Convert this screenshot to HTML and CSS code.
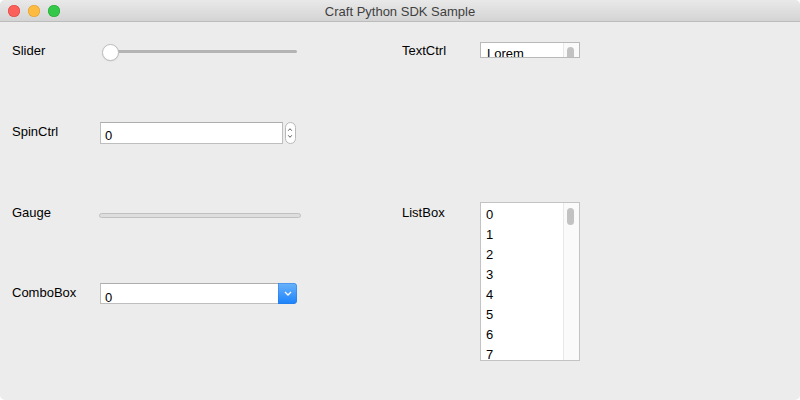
FILE: index.html
```html
<!DOCTYPE html>
<html>
<head>
<meta charset="utf-8">
<title>Craft Python SDK Sample</title>
<link rel="stylesheet" href="styles.css">
</head>
<body>
<div class="window">
  <div class="titlebar">
    <div class="lights">
      <span class="light red"></span>
      <span class="light yellow"></span>
      <span class="light green"></span>
    </div>
    <div class="title">Craft Python SDK Sample</div>
    <div></div>
  </div>
  <div class="content">
    <div class="label c1 r1">Slider</div>
    <div class="slider c2 r1">
      <div class="slider-track"></div>
      <div class="slider-thumb"></div>
    </div>
    <div class="label c4 r1">TextCtrl</div>
    <div class="textctrl c5 r1">
      <div class="tc-text">Lorem</div>
      <div class="sb"><div class="thumb tc-thumb"></div></div>
    </div>

    <div class="label c1 r2 lbl2">SpinCtrl</div>
    <div class="spin c2 r2">
      <div class="spin-input">0</div>
      <div class="spin-btn">
        <svg width="11" height="22" viewBox="0 0 11 22"><polyline points="3.5,8.5 5.5,6.3 7.5,8.5" fill="none" stroke="#4a4a4a" stroke-width="1"/><polyline points="3.5,13.5 5.5,15.7 7.5,13.5" fill="none" stroke="#4a4a4a" stroke-width="1"/></svg>
      </div>
    </div>

    <div class="label c1 r3 lbl3">Gauge</div>
    <div class="gauge c2 r3"></div>
    <div class="label c4 r3 lbl3">ListBox</div>
    <div class="listbox c5 r3">
      <div class="items">
        <div>0</div><div>1</div><div>2</div><div>3</div><div>4</div><div>5</div><div>6</div><div>7</div>
      </div>
      <div class="sb"><div class="thumb lb-thumb"></div></div>
    </div>

    <div class="label c1 r4 lbl3">ComboBox</div>
    <div class="combo c2 r4">
      <div class="combo-input">0</div>
      <div class="combo-btn">
        <svg width="8" height="5" viewBox="0 0 8 5"><polyline points="1,1 4,4 7,1" fill="none" stroke="#ffffff" stroke-width="1.3"/></svg>
      </div>
    </div>
  </div>
</div>
</body>
</html>
```

FILE: styles.css
```css
* { box-sizing: border-box; }
html, body { margin: 0; padding: 0; }
body {
  background: #ffffff;
  font-family: "Liberation Sans", Arial, sans-serif;
  font-size: 13px;
  color: #000;
}
.window {
  width: 800px;
  height: 400px;
  background: #ececec;
  border-radius: 5px;
  overflow: hidden;
}
.titlebar {
  height: 22px;
  background: linear-gradient(#e9e9e9, #d4d4d4);
  border-bottom: 1px solid #bcbcbc;
  display: grid;
  grid-template-columns: 1fr auto 1fr;
  padding-top: 4px;
}
.lights {
  display: flex;
  gap: 8px;
  padding-left: 8px;
  margin-top: 1px;
  align-items: flex-start;
}
.light {
  width: 12px;
  height: 12px;
  border-radius: 50%;
}
.red { background: #fc605b; box-shadow: inset 0 0 0 0.6px #de4a45; }
.yellow { background: #fdbc40; box-shadow: inset 0 0 0 0.6px #dea034; }
.green { background: #34c84a; box-shadow: inset 0 0 0 0.6px #27aa35; }
.title {
  line-height: 16px;
  color: #3f3f3f;
}
.content {
  display: grid;
  grid-template-columns: 88px 197px 105px 78px 100px;
  grid-template-rows: repeat(4, 80px);
  padding: 20px 0 0 12px;
  align-items: start;
}
.c1 { grid-column: 1; }
.c2 { grid-column: 2; }
.c4 { grid-column: 4; }
.c5 { grid-column: 5; }
.r1 { grid-row: 1; }
.r2 { grid-row: 2; }
.r3 { grid-row: 3; }
.r4 { grid-row: 4; }
.label {
  line-height: 16px;
  margin-top: 1px;
}
.lbl2 { margin-top: 2px; }
.lbl3 { margin-top: 3px; }

/* slider */
.slider {
  position: relative;
  height: 17px;
  margin-top: 2px;
}
.slider-track {
  margin: 6px 0 0 10px;
  height: 3px;
  background: #b4b4b4;
  border-radius: 2px;
}
.slider-thumb {
  position: absolute;
  left: 2px;
  top: 0;
  width: 17px;
  height: 17px;
  border-radius: 50%;
  background: #fff;
  border: 1px solid #bdbdbd;
  box-shadow: 0 0.5px 1px rgba(0,0,0,0.12);
}

/* text ctrl */
.textctrl {
  height: 16px;
  border: 1px solid #b9b9b9;
  background: #fff;
  display: flex;
  overflow: hidden;
}
.tc-text {
  flex: 1;
  padding: 3px 0 0 6px;
  line-height: 16px;
}
.sb {
  width: 16px;
  border-left: 1px solid #e8e8e8;
  background: #fafafa;
  flex: none;
}
.thumb {
  width: 7px;
  border-radius: 4px;
  background: #c2c2c2;
  margin-left: 2.5px;
}
.tc-thumb { margin-top: 4px; height: 18px; }
.lb-thumb { margin-top: 5px; height: 17px; }

/* spin */
.spin {
  display: flex;
  gap: 2px;
}
.spin-input {
  width: 183px;
  height: 22px;
  border: 1px solid #bebebe;
  border-top-color: #adadad;
  background: #fff;
  padding: 5px 0 0 4px;
  line-height: 16px;
  overflow: hidden;
}
.spin-btn {
  width: 11px;
  height: 22px;
  border: 1px solid #b9b9b9;
  border-radius: 6px;
  background: #fff;
  display: flex;
  overflow: hidden;
}
.spin-btn svg { display: block; margin: -1px 0 0 -1px; }

/* gauge */
.gauge {
  margin: 11px 0 0 -1px;
  width: 202px;
  height: 5px;
  border-radius: 3px;
  background: #dedede;
  border: 1px solid #c0c0c0;
}

/* listbox */
.listbox {
  grid-row: 3 / span 2;
  height: 159px;
  border: 1px solid #c3c3c3;
  background: #fff;
  display: flex;
  overflow: hidden;
}
.items {
  flex: 1;
  padding: 2px 0 0 5px;
  line-height: 20px;
}

/* combo */
.combo {
  display: flex;
  height: 21px;
  margin-top: 1px;
}
.combo-input {
  flex: 1;
  border: 1px solid #bebebe;
  border-top-color: #adadad;
  border-right: none;
  background: #fff;
  padding: 6px 0 0 4px;
  line-height: 16px;
  overflow: hidden;
}
.combo-btn {
  width: 19px;
  background: linear-gradient(#6cb3fa, #1a82fb);
  border-radius: 0 4px 4px 0;
  box-shadow: inset 0 0 0 0.5px #2a7de0;
  display: flex;
  align-items: center;
  justify-content: center;
}
.combo-btn svg { display: block; }
```
